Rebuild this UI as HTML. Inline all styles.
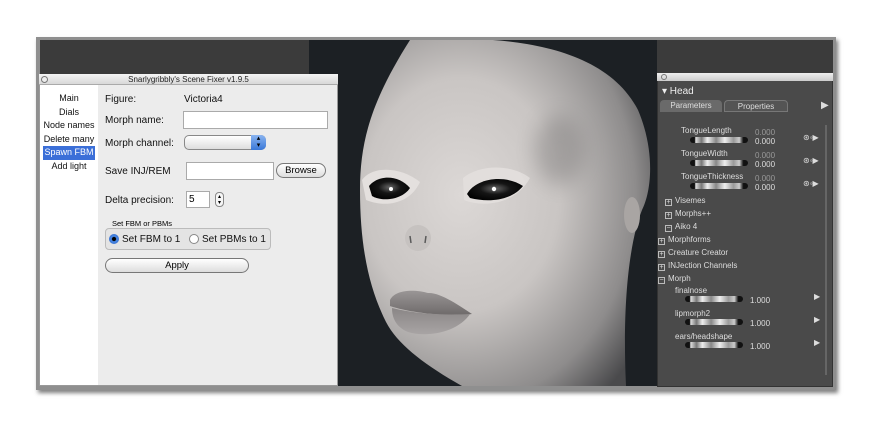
<!DOCTYPE html>
<html><head><style>
*{margin:0;padding:0;box-sizing:border-box}
body{width:872px;height:426px;background:#fff;position:relative;overflow:hidden;font-family:"Liberation Sans",sans-serif}
.a{position:absolute}
.frame{left:36px;top:37px;width:800px;height:353px;background:#8f8f8f;box-shadow:2px 3px 4px rgba(0,0,0,.5)}
.lbl{font-size:10px;color:#111}
.list div{font-size:9px;text-align:center;height:13.6px;line-height:13.6px;color:#111;white-space:nowrap}
.rp{color:#ddd;font-size:8px;white-space:nowrap}
.sl{height:6px;width:58px;border-radius:3px;background:linear-gradient(90deg,#111 0 8%,#ddd 10%,#777 20%,#eee 30%,#888 45%,#eee 60%,#999 75%,#ccc 85%,#111 92%);}
.pm{display:inline-block;width:7px;height:7px;border:1px solid #bbb;margin-right:3px;vertical-align:-1px;font-size:7px;line-height:5px;text-align:center;color:#ddd}
</style></head><body>
<div class="a frame"></div>
<div class="a" style="left:40px;top:40px;width:270px;height:34px;background:#3b3b3b"></div>
<div class="a" style="left:309px;top:40px;width:349px;height:346px;background:#1c2024"></div>
<svg class="a" style="left:309px;top:40px" width="349" height="346" viewBox="309 40 349 346">
<defs>
<radialGradient id="sk" cx="0.35" cy="0.45" r="0.75"><stop offset="0" stop-color="#dcd8d6"/><stop offset="0.45" stop-color="#c9c5c3"/><stop offset="0.8" stop-color="#8e8c8c"/><stop offset="1" stop-color="#4a4a4c"/></radialGradient>
<radialGradient id="ey" cx="0.5" cy="0.45" r="0.6"><stop offset="0" stop-color="#666"/><stop offset="0.45" stop-color="#151515"/><stop offset="1" stop-color="#000"/></radialGradient>
<linearGradient id="lp" x1="0" y1="0" x2="0" y2="1"><stop offset="0" stop-color="#9a9696"/><stop offset="1" stop-color="#6e6a6a"/></linearGradient>
<linearGradient id="lp2" x1="0" y1="0" x2="0" y2="1"><stop offset="0" stop-color="#8a8686"/><stop offset="1" stop-color="#a8a4a4"/></linearGradient>
<filter id="bl" x="-100%" y="-100%" width="300%" height="300%"><feGaussianBlur stdDeviation="10"/></filter>
</defs>
<path d="M410 40 C480 36 600 36 638 110 C655 150 652 190 642 210 C630 240 622 300 626 386 L462 386 C425 365 398 345 386 322 C370 290 360 250 360 190 C360 140 372 100 410 40 Z" fill="url(#sk)"/>
<path d="M362 180 C372 166 400 166 420 182 C410 204 385 208 366 200Z" fill="#e4e0de"/>
<path d="M369 186 C378 175 398 174 410 188 C402 200 382 202 372 196Z" fill="url(#ey)"/>
<path d="M463 178 C480 164 512 164 530 178 C516 204 484 208 464 200Z" fill="#e2dedc"/>
<path d="M467 194 C476 178 505 174 523 186 C512 200 490 203 470 198Z" fill="url(#ey)"/>
<circle cx="391" cy="189" r="2" fill="#fff"/><circle cx="494" cy="189" r="2.2" fill="#fff"/>
<ellipse cx="560" cy="150" rx="25" ry="35" fill="#7a7878" opacity=".45" filter="url(#bl)"/>
<ellipse cx="418" cy="238" rx="13" ry="13" fill="#c6c2c0"/>
<path d="M410 236 l1 7 M426 236 l-1 7" stroke="#5a5a5a" stroke-width="1.5"/>
<path d="M390 300 C396 288 418 290 428 293 C440 292 460 306 472 314 C450 317 410 313 390 306Z" fill="url(#lp)"/>
<path d="M392 308 C420 315 450 315 470 314 C458 332 428 338 408 332 C396 327 392 318 392 308Z" fill="url(#lp2)"/>
<ellipse cx="632" cy="215" rx="8" ry="18" fill="#a9a5a3"/>
</svg>
<!-- dialog -->
<div class="a" style="left:39px;top:74px;width:299px;height:312px;background:#ececec;border:1px solid #999"></div>
<div class="a" style="left:39px;top:74px;width:299px;height:11px;background:linear-gradient(#f4f4f4,#d8d8d8);border-bottom:1px solid #aaa;font-size:8px;text-align:center;line-height:11px;color:#222">Snarlygribbly's Scene Fixer v1.9.5</div>
<div class="a" style="left:41px;top:76px;width:7px;height:7px;border-radius:50%;border:1px solid #777;background:#eee"></div>
<div class="a list" style="left:40px;top:85px;width:58px;height:300px;background:#fff;padding-top:7px">
<div>Main</div><div>Dials</div><div>Node names</div><div>Delete many</div><div style="background:#3b6fd8;color:#fff;margin:0 3px">Spawn FBM</div><div>Add light</div></div>
<div class="a lbl" style="left:105px;top:94px">Figure:</div>
<div class="a lbl" style="left:184px;top:94px">Victoria4</div>
<div class="a lbl" style="left:105px;top:115px">Morph name:</div>
<div class="a" style="left:183px;top:111px;width:145px;height:18px;background:#fff;border:1px solid #aaa"></div>
<div class="a lbl" style="left:105px;top:138px">Morph channel:</div>
<div class="a" style="left:184px;top:135px;width:82px;height:15px;border-radius:5px;border:1px solid #888;background:linear-gradient(#fff,#ddd)"></div>
<div class="a" style="left:251px;top:135px;width:15px;height:15px;border-radius:0 5px 5px 0;background:linear-gradient(#8ab4f0,#3a78d8);color:#000;font-size:7px;text-align:center;line-height:7px">▴<br>▾</div>
<div class="a lbl" style="left:105px;top:166px">Save INJ/REM</div>
<div class="a" style="left:186px;top:162px;width:88px;height:18px;background:#fff;border:1px solid #aaa"></div>
<div class="a" style="left:276px;top:163px;width:50px;height:15px;border-radius:8px;border:1px solid #777;background:linear-gradient(#fff,#ddd);font-size:9.5px;text-align:center;line-height:13px">Browse</div>
<div class="a lbl" style="left:105px;top:195px">Delta precision:</div>
<div class="a" style="left:186px;top:191px;width:24px;height:17px;background:#fff;border:1px solid #aaa;font-size:10px;padding-left:2px;line-height:15px">5</div>
<div class="a" style="left:215px;top:192px;width:9px;height:15px;border-radius:4px;border:1px solid #888;background:#f6f6f6;font-size:6px;text-align:center;line-height:6px;padding-top:1px">▴<br>▾</div>
<div class="a" style="left:112px;top:219px;font-size:7.5px">Set FBM or PBMs</div>
<div class="a" style="left:105px;top:228px;width:166px;height:22px;border:1px solid #bbb;border-radius:4px;background:#e4e4e4"></div>
<div class="a" style="left:109px;top:234px;width:10px;height:10px;border-radius:50%;background:radial-gradient(#000 25%,#4a8ae8 35%,#2a60c0)"></div>
<div class="a lbl" style="left:122px;top:234px">Set FBM to 1</div>
<div class="a" style="left:189px;top:234px;width:10px;height:10px;border-radius:50%;border:1px solid #888;background:#fff"></div>
<div class="a lbl" style="left:202px;top:234px">Set PBMs to 1</div>
<div class="a" style="left:105px;top:258px;width:144px;height:15px;border-radius:8px;border:1px solid #777;background:linear-gradient(#fff,#ddd);font-size:9.5px;text-align:center;line-height:13px">Apply</div>
<!-- right panel -->
<div class="a" style="left:657px;top:40px;width:176px;height:33px;background:#3b3b3b"></div>
<div class="a" style="left:657px;top:73px;width:176px;height:314px;background:#4a4a4a;border:1px solid #333"></div>
<div class="a" style="left:657px;top:73px;width:176px;height:8px;background:linear-gradient(#eee,#ccc)"></div>
<div class="a" style="left:661px;top:74px;width:6px;height:6px;border-radius:50%;border:1px solid #777"></div>
<div class="a rp" style="left:662px;top:86px;font-size:10px;color:#eee">▾ Head</div>
<div class="a rp" style="left:660px;top:100px;width:62px;height:12px;background:#6a6a6a;border-radius:4px 4px 0 0;text-align:center;line-height:12px">Parameters</div>
<div class="a rp" style="left:724px;top:100px;width:64px;height:12px;background:#545454;border:1px solid #777;border-radius:4px 4px 0 0;text-align:center;line-height:11px">Properties</div>
<div class="a rp" style="left:821px;top:100px;font-size:10px">▶</div>
<div class="a" style="left:825px;top:125px;width:2px;height:250px;background:#666"></div>
<div class="a rp" style="left:681px;top:126px">TongueLength</div><div class="a sl" style="left:690px;top:137px"></div><div class="a rp" style="left:755px;top:128px;color:#999">0.000<br><span style="color:#ddd">0.000</span></div><div class="a rp" style="left:803px;top:133px">⊛◦▶</div>
<div class="a rp" style="left:681px;top:149px">TongueWidth</div><div class="a sl" style="left:690px;top:160px"></div><div class="a rp" style="left:755px;top:151px;color:#999">0.000<br><span style="color:#ddd">0.000</span></div><div class="a rp" style="left:803px;top:156px">⊛◦▶</div>
<div class="a rp" style="left:681px;top:172px">TongueThickness</div><div class="a sl" style="left:690px;top:183px"></div><div class="a rp" style="left:755px;top:174px;color:#999">0.000<br><span style="color:#ddd">0.000</span></div><div class="a rp" style="left:803px;top:179px">⊛◦▶</div>
<div class="a rp" style="left:665px;top:196px"><span class="pm">+</span>Visemes</div>
<div class="a rp" style="left:665px;top:209px"><span class="pm">+</span>Morphs++</div>
<div class="a rp" style="left:665px;top:222px"><span class="pm">−</span>Aiko 4</div>
<div class="a rp" style="left:658px;top:235px"><span class="pm">+</span>Morphforms</div>
<div class="a rp" style="left:658px;top:248px"><span class="pm">+</span>Creature Creator</div>
<div class="a rp" style="left:658px;top:261px"><span class="pm">+</span>INJection Channels</div>
<div class="a rp" style="left:658px;top:274px"><span class="pm">−</span>Morph</div>
<div class="a rp" style="left:675px;top:286px">finalnose</div><div class="a sl" style="left:685px;top:296px"></div><div class="a rp" style="left:750px;top:296px">1.000</div><div class="a rp" style="left:814px;top:292px">▶</div>
<div class="a rp" style="left:675px;top:309px">lipmorph2</div><div class="a sl" style="left:685px;top:319px"></div><div class="a rp" style="left:750px;top:319px">1.000</div><div class="a rp" style="left:814px;top:315px">▶</div>
<div class="a rp" style="left:675px;top:332px">ears/headshape</div><div class="a sl" style="left:685px;top:342px"></div><div class="a rp" style="left:750px;top:342px">1.000</div><div class="a rp" style="left:814px;top:338px">▶</div>
</body></html>
